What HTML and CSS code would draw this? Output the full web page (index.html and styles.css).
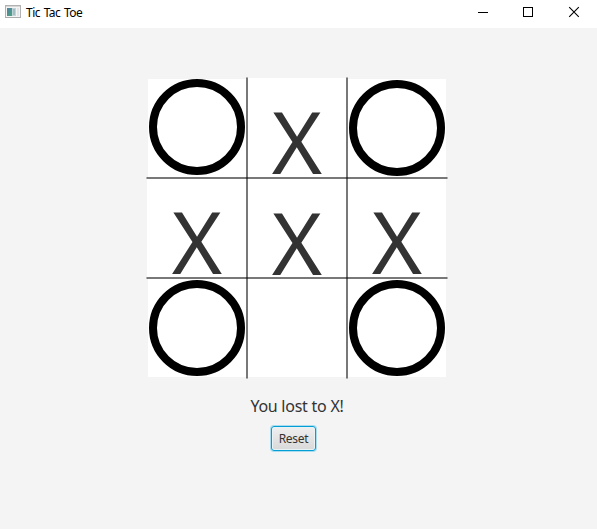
FILE: index.html
```html
<!DOCTYPE html>
<html lang="en">
<head>
<meta charset="utf-8">
<title>Tic Tac Toe</title>
<link rel="stylesheet" href="styles.css">
</head>
<body>
<div class="window">
  <header class="titlebar">
    <svg class="app-icon" width="16" height="14" viewBox="0 0 16 14">
      <defs><linearGradient id="pane" x1="0" y1="0" x2="1" y2="1"><stop offset="0" stop-color="#4f80a8"/><stop offset="1" stop-color="#4aa578"/></linearGradient></defs>
      <rect x=".5" y=".5" width="15" height="12" fill="#f4f4f4" stroke="#b0b2b3"/>
      <path d="M1 1.5h14" stroke="#d4d6d8"/>
      <rect x="2" y="3" width="5" height="8" fill="url(#pane)"/>
      <rect x="7" y="3" width="4" height="8" fill="#c3d2d8"/>
      <rect x="8" y="4" width="2" height="6" fill="#9dbfc0"/>
      <rect x="12" y="3" width="2" height="8" fill="#e2e4e5"/>
      <path d="M0 12.5h16" stroke="#a9abac"/>
    </svg>
    <span class="title">Tic Tac Toe</span>
    <div class="controls">
      <svg width="46" height="24" viewBox="0 0 46 24"><path d="M18 12.5h10" stroke="#000"/></svg>
      <svg width="46" height="24" viewBox="0 0 46 24"><rect x="17.5" y="7.5" width="9" height="9" fill="none" stroke="#000"/></svg>
      <svg width="46" height="24" viewBox="0 0 46 24"><path d="M17.2 7.2l9.6 9.6M26.8 7.2l-9.6 9.6" stroke="#000" stroke-width="1.1"/></svg>
    </div>
  </header>
  <main class="content">
    <div class="board">
      <div class="cell"><svg class="mark raised" viewBox="0 0 100 100"><circle cx="50" cy="50" r="44"/></svg></div>
      <div class="cell top"><svg class="mark" viewBox="0 0 100 100"><text x="50" y="96">X</text></svg></div>
      <div class="cell"><svg class="mark" viewBox="0 0 100 100"><circle cx="50" cy="50" r="44"/></svg></div>
      <div class="cell left"><svg class="mark" viewBox="0 0 100 100"><text x="50" y="96">X</text></svg></div>
      <div class="cell"><svg class="mark" viewBox="0 0 100 100"><text x="50" y="97">X</text></svg></div>
      <div class="cell"><svg class="mark" viewBox="0 0 100 100"><text x="50" y="96">X</text></svg></div>
      <div class="cell"><svg class="mark" viewBox="0 0 100 100"><circle cx="50" cy="50" r="44"/></svg></div>
      <div class="cell"></div>
      <div class="cell"><svg class="mark" viewBox="0 0 100 100"><circle cx="50" cy="50" r="44"/></svg></div>
      <svg class="rules" width="302" height="302" viewBox="0 0 302 302">
        <path d="M101 .5v301"/><path d="M201 .5v301"/><path d="M.5 101h301"/><path d="M.5 201h301"/>
      </svg>
    </div>
    <p class="status">You lost to X!</p>
    <button class="reset">Reset</button>
  </main>
</div>
</body>
</html>
```

FILE: styles.css
```css
* { box-sizing: border-box; }
body { margin: 0; font-family: "Noto Sans", "Open Sans", sans-serif; }
.window { width: 597px; height: 529px; background: #f4f4f4; overflow: hidden; }
.titlebar { display: flex; height: 28px; padding-left: 5px; background: #fff; }
.app-icon { margin-top: 5px; }
.title { margin-left: 5px; font-size: 12px; line-height: 25px; letter-spacing: -0.5px; word-spacing: 1px; color: #000; }
.controls { display: flex; margin-left: auto; margin-right: -1px; }
.content { display: flex; flex-direction: column; align-items: center; padding: 50px 3px 0 0; }
.board { position: relative; display: grid; grid-template-columns: repeat(3, 100px); grid-template-rows: repeat(3, 100px); width: 300px; height: 300px; }
.cell { background: #fff; background-clip: content-box; }
.cell:nth-child(-n+3):not(.top) { padding-top: 1px; }
.cell:nth-child(3n+1):not(.left) { padding-left: 1px; }
.cell:nth-child(3n) { padding-right: 1px; }
.cell:nth-child(n+7):nth-child(-n+9) { padding-bottom: 1px; }
.mark { display: block; width: 100px; height: 100px; overflow: visible; }
.cell:nth-child(-n+3):not(.top) .mark { margin-top: -1px; }
.cell:nth-child(3n+1):not(.left) .mark { margin-left: -1px; }
.mark circle { fill: none; stroke: #000; stroke-width: 8; }
.mark text { font-family: "Noto Sans", sans-serif; font-size: 86px; text-anchor: middle; fill: #333; }
.mark.raised circle { transform: translateY(-1px); }
.rules { position: absolute; left: -1px; top: -1px; overflow: visible; }
.rules path { stroke: rgba(0, 0, 0, .53); stroke-width: 2; }
.status { margin: 16px 0 0; font-size: 16px; line-height: 24px; letter-spacing: -0.25px; color: #333; }
.reset { width: 45px; height: 25px; margin: 8px 7px 0 0; padding: 0; border: 1px solid #039ed3; border-radius: 3px; background: linear-gradient(#efefef, #d9d9d9); box-shadow: inset 0 0 0 1px #e9f3f6, 0 0 0 1px #a9dcee; color: #333; font-family: inherit; font-size: 12px; line-height: 20px; letter-spacing: -0.3px; }
```
